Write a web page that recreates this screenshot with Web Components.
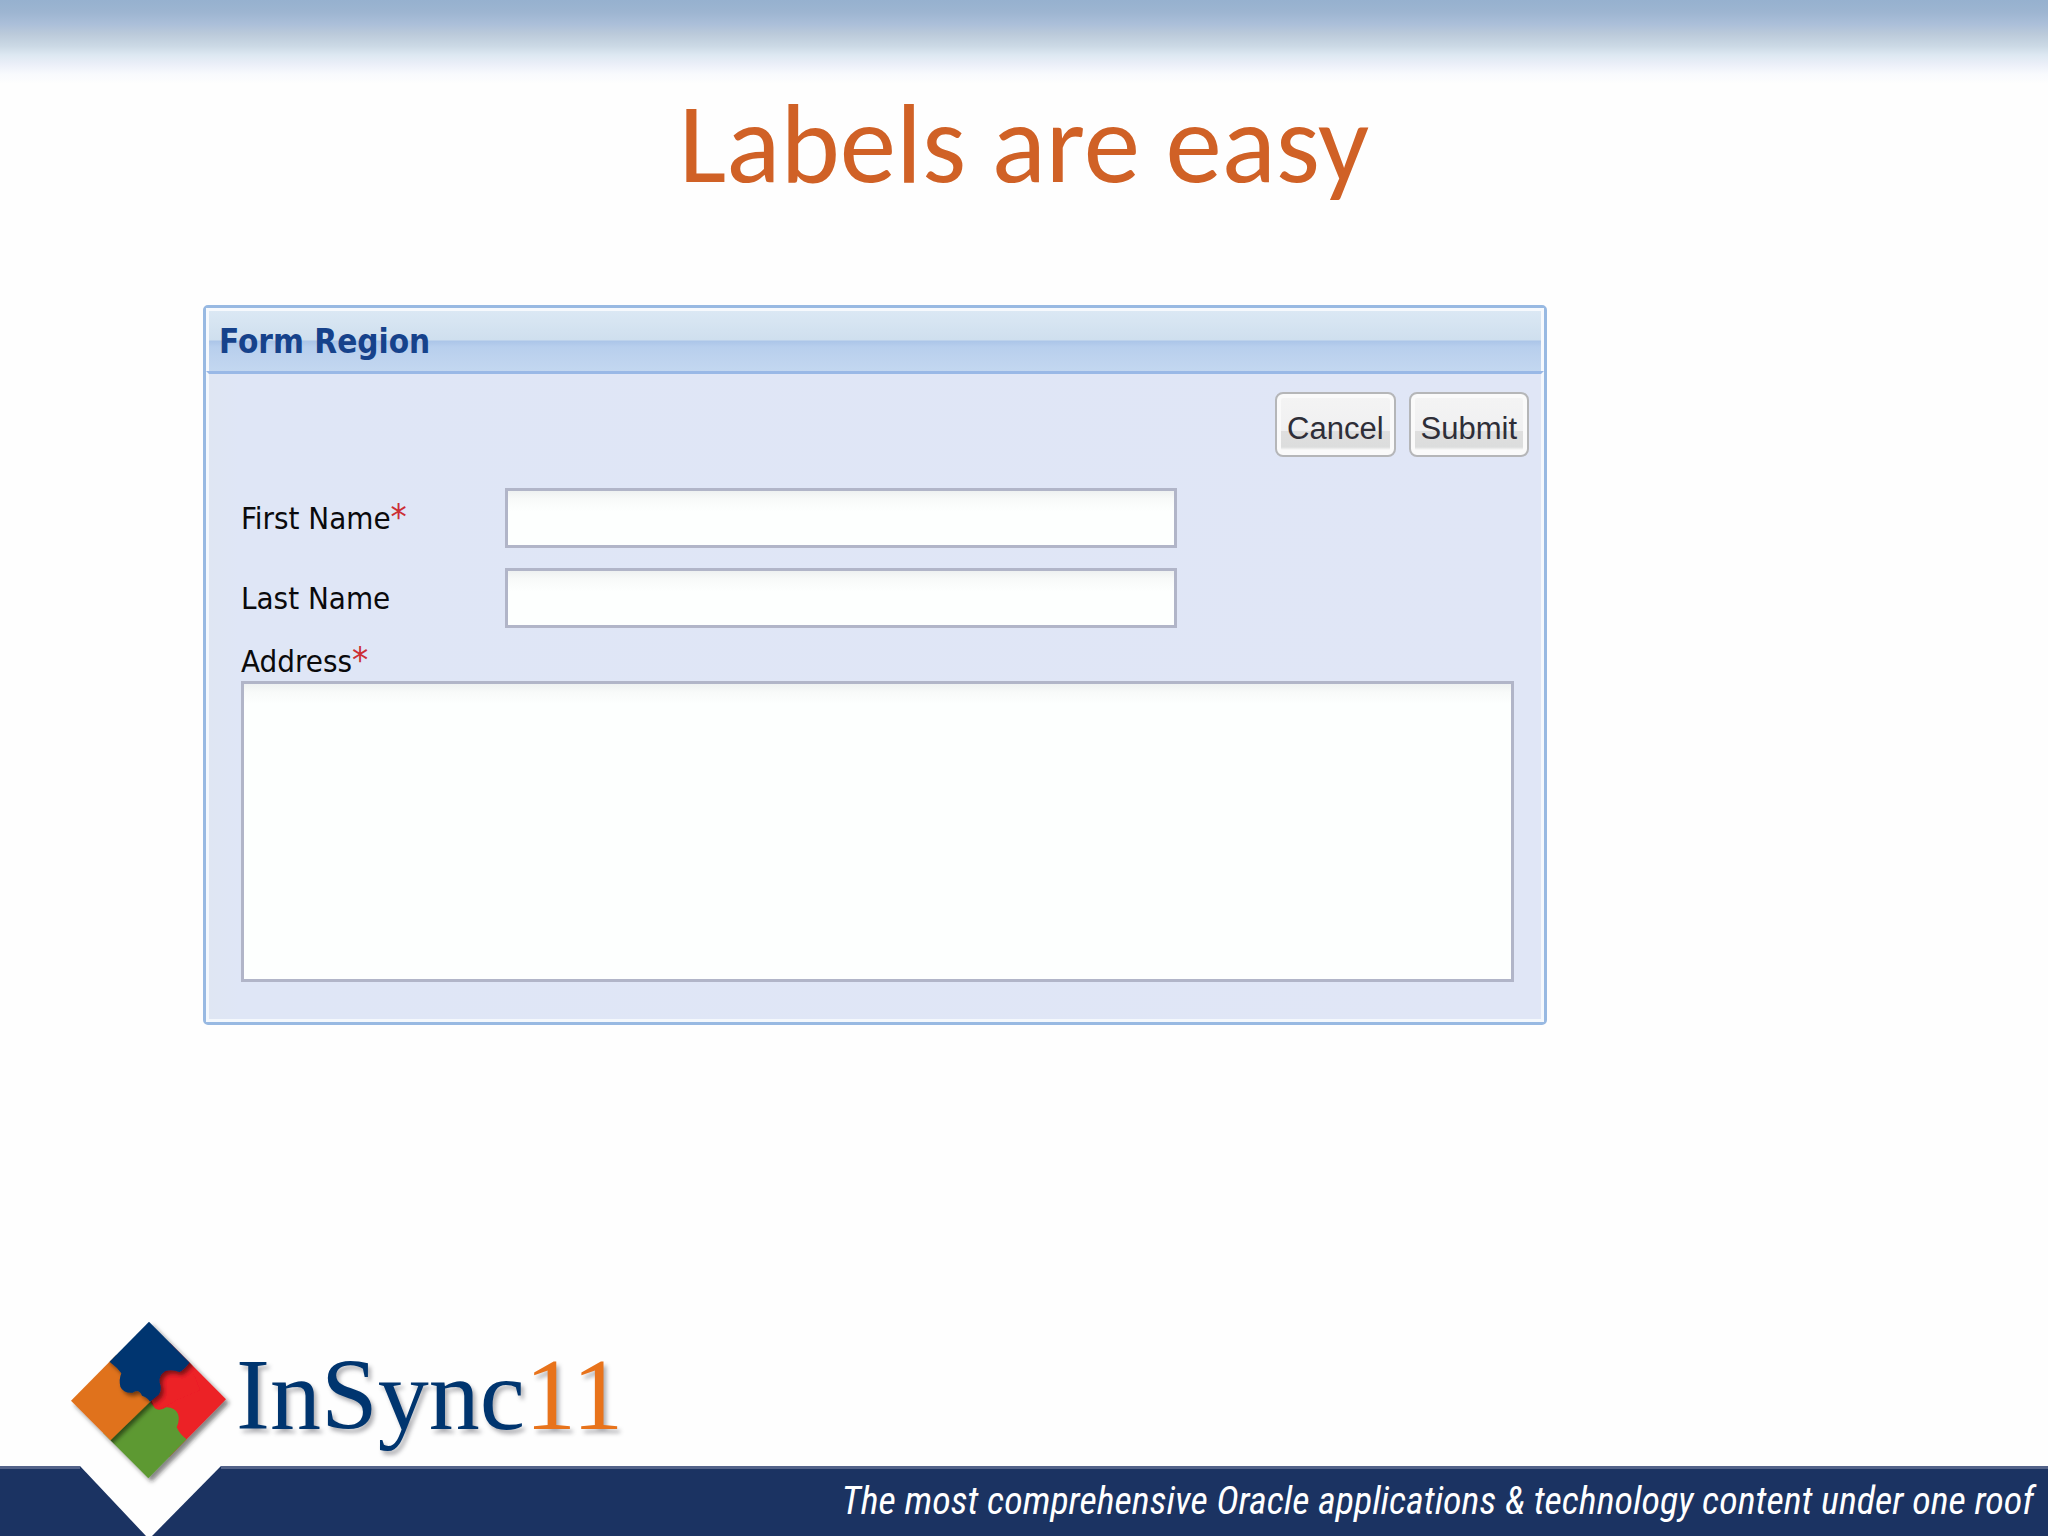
<!DOCTYPE html>
<html lang="en">
<head>
<meta charset="utf-8">
<title>Labels are easy</title>
<style>
  body { margin: 0; background: #fefefe; font-family: "Liberation Sans", Arial, sans-serif; }
</style>
</head>
<body>
<slide-page>
  <slide-title slot="title">Labels are easy</slide-title>
  <form-region heading="Form Region">
    <form-button slot="actions">Cancel</form-button>
    <form-button slot="actions">Submit</form-button>
    <form-field label="First Name" required></form-field>
    <form-field label="Last Name"></form-field>
    <form-field label="Address" required multiline></form-field>
  </form-region>
  <brand-logo slot="brand"></brand-logo>
  <slide-footer slot="footer">The most comprehensive Oracle applications &amp; technology content under one roof</slide-footer>
</slide-page>

<script>
const define = (name, html, setup) => {
  const template = document.createElement('template');
  template.innerHTML = html;
  customElements.define(name, class extends HTMLElement {
    connectedCallback() {
      if (this.shadowRoot) return;
      const root = this.attachShadow({ mode: 'open' });
      root.append(template.content.cloneNode(true));
      if (setup) setup(this, root);
    }
  });
};

define('slide-page', `
  <style>
    :host {
      display: flex; flex-direction: column; box-sizing: border-box; min-height: 100vh;
      background: linear-gradient(#96b1cf 0, #9db5d1 12px, #abbfd9 24px, #bbcada 34px, #cbd9e5 46px, #dde8f2 55px, #ebeff8 64px, #f8fafd 74px, #fefefe 84px) no-repeat;
    }
    header { padding-top: 83px; }
    main { padding: 101px 501px 40px 203px; flex: 1; }
  </style>
  <header><slot name="title"></slot></header>
  <main><slot></slot></main>
  <slot name="brand"></slot>
  <slot name="footer"></slot>
`);

define('slide-title', `
  <style>
    :host { display: block; }
    h1 { margin: 0; text-align: center; color: #d06126; font: 400 113px/121px Carlito, Lato, sans-serif; }
  </style>
  <h1><slot></slot></h1>
`);

define('form-region', `
  <style>
    :host { display: block; }
    section { border: 3px solid #98b9e2; border-radius: 5px; background: #fff; }
    header {
      border: solid #f6f9fd; border-width: 3px 3px 0; padding: 0 10px; height: 60px;
      background: linear-gradient(#dbe8f4, #cfdfee 29px, #abc5e8 30px, #b8cfed 36px, #c3d7f0) padding-box;
    }
    h2 { margin: 0; color: #16428b; font: 700 33px/62px "DejaVu Sans Condensed", "DejaVu Sans", sans-serif; }
    form {
      border: solid #f4f8fd; border-width: 0 3px 3px; border-top: 3px solid #99b8e6;
      padding: 18px 27px 37px 32px;
      background: linear-gradient(90deg, #dfe6f3, #dfe6f6 30px, #e0e6f6) padding-box;
    }
    .actions { display: flex; justify-content: flex-end; gap: 13px; margin: 0 -15px 31px 0; }
    .fields { display: flex; flex-direction: column; gap: 20px; }
  </style>
  <section>
    <header><h2></h2></header>
    <form>
      <div class="actions"><slot name="actions"></slot></div>
      <div class="fields"><slot></slot></div>
    </form>
  </section>
`, (host, root) => { root.querySelector('h2').textContent = host.getAttribute('heading'); });

define('form-button', `
  <style>
    :host { display: block; }
    button {
      display: block; box-sizing: border-box; height: 65px; padding: 8px 10px 0;
      border: 2px solid #b5b6b8; border-radius: 8px; color: #2e2e38;
      font: 400 31px/40px "Liberation Sans", Arial, sans-serif;
      background: linear-gradient(#f4f4f4, #f0f0f1 37px, #dfdfdf 37px, #dcdddd 53px, #fafafa 56px);
      box-shadow: inset 0 0 0 4px #fafafa;
    }
  </style>
  <button type="button"><slot></slot></button>
`);

define('form-field', `
  <style>
    :host { display: flex; align-items: center; }
    :host([multiline]) { display: block; margin-top: -5px; }
    label { box-sizing: border-box; width: 264px; color: #0a0a0c; font: 400 31px/36px "DejaVu Sans Condensed", "DejaVu Sans", sans-serif; }
    :host([multiline]) label { display: block; margin-bottom: 2px; }
    .star { color: #cc2f35; font-size: 36px; line-height: 1px; }
    input, textarea {
      display: block; box-sizing: border-box; margin: 0; border: 3px solid #b1b5c8; border-radius: 0; padding: 4px 8px;
      font: 400 31px/36px "DejaVu Sans Condensed", "DejaVu Sans", sans-serif; outline: 0;
      background: linear-gradient(#eef1f1, #f8faf9 8px, #fdfffe 20px);
    }
    input { width: 672px; height: 60px; }
    textarea { width: 100%; height: 301px; resize: none; }
  </style>
  <label for="control"></label>
`, (host, root) => {
  const label = root.querySelector('label');
  label.textContent = host.getAttribute('label');
  if (host.hasAttribute('required')) {
    const star = document.createElement('span');
    star.className = 'star';
    star.textContent = '*';
    label.append(star);
  }
  const control = document.createElement(host.hasAttribute('multiline') ? 'textarea' : 'input');
  control.id = 'control';
  root.append(control);
});

define('brand-logo', `
  <style>
    :host { display: flex; align-items: center; position: relative; z-index: 1; padding-left: 60px; margin-bottom: -24px; }
    svg { display: block; flex: none; }
    .name { padding-bottom: 10px; color: #00356f; font: 400 102px/100px "Liberation Serif", "Times New Roman", serif; text-shadow: 3px 4px 4px rgba(60,60,70,.4); }
    .year { color: #e8731b; }
  </style>
  <svg width="176" height="180" viewBox="0 0 528 540" aria-hidden="true">
    <defs>
      <clipPath id="diamond"><path d="M267 35 498 268 265 505 33 272Z"/></clipPath>
      <filter id="outer" x="-20%" y="-20%" width="140%" height="140%"><feDropShadow dx="10" dy="11" stdDeviation="6" flood-color="#222" flood-opacity=".55"/></filter>
      <filter id="piece" x="-20%" y="-20%" width="150%" height="150%"><feDropShadow dx="8" dy="9" stdDeviation="6" flood-color="#000" flood-opacity=".5"/></filter>
    </defs>
    <g filter="url(#outer)">
      <g clip-path="url(#diamond)">
        <path fill="#ec2027" d="M250 100H540V440H250Z"/>
        <path fill="#5d9932" d="M240 250 100 400 265 540 380 388Q360 374 350 352 360 332 354 312 344 291 318 292 300 304 285 294L268 272Z"/>
        <path fill="#e0721c" filter="url(#piece)" d="M0 272 152 120 290 255 270 275 152 390 110 440Z"/>
        <path fill="#ec2027" d="M388 158 300 160 275 272 285 295Q300 304 312 292L350 270 420 240Z"/>
        <path fill="#00356f" filter="url(#piece)" d="M267 20 400 146 388 158Q374 178 358 186 338 178 316 183 294 198 299 218 307 238 296 254L270 275Q262 262 246 257 236 235 218 248 190 250 181 230 176 208 184 190 172 172 152 158L140 146Z"/>
      </g>
    </g>
  </svg>
  <div class="name">InSync<span class="year">11</span></div>
`);

define('slide-footer', `
  <style>
    :host { display: flex; justify-content: space-between; align-items: flex-start; background: #1b3362; }
    .notch { display: block; flex: none; margin-left: 80px; }
    p { flex: 1; margin: 0; padding: 9px 14px 12px; border-top: 3px solid #536389; text-align: right; color: #fff;
        font: italic 400 38px/46px "Arial Narrow", "Roboto Condensed", "Liberation Sans", sans-serif; white-space: nowrap; }
    .edge { width: 80px; margin-right: -80px; border-top: 3px solid #536389; }
  </style>
  <div class="edge"></div>
  <svg class="notch" width="141" height="70" viewBox="0 0 141 70" aria-hidden="true"><path fill="#fefefe" d="M0 0H141L72 70H66Z"/></svg>
  <p><slot></slot></p>
`);
</script>
</body>
</html>
